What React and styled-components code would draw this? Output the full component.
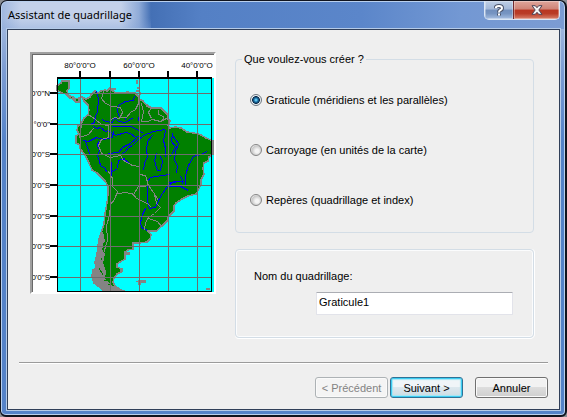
import React, { useState } from "react";
import styled, { createGlobalStyle } from "styled-components";

const GlobalStyle = createGlobalStyle`
  * { box-sizing: border-box; }
  body {
    margin: 0;
    background: #8c8f94;
    color: #000;
    font: 11px/14px "Liberation Sans", Arial, sans-serif;
  }
  button, input { font: inherit; color: inherit; }
`;

const Dialog = styled.main`
  display: flex;
  flex-direction: column;
  min-height: 100vh;
  padding: 0 5px 5px 6px;
  border: 1px solid #10141f;
  border-right-width: 2px;
  border-bottom-width: 2px;
  border-radius: 7px 7px 6px 6px;
  box-shadow: inset 0 0 0 1px #b9d0ee;
  background:
    linear-gradient(#7f9fd500 0, #7f9fd500 60%, #7f9fd555 100%) left top / 150px 28px no-repeat,
    linear-gradient(90deg, #9fb7de 0, #c3d1ea 20px, #c3d1ea 120px, #8fabd8 138px, #4470b5 150px, #5480c5 200px, #5b86ca 360px, #7398d3 460px, #7c9cd3 100%) top / 100% 28px no-repeat,
    linear-gradient(#9db5dd 28px, #7c9cd3 70px, #5583c9 140px);
`;

const TitleBar = styled.header`
  display: flex;
  align-items: flex-start;
  justify-content: space-between;
  height: 28px;
`;

const Title = styled.h1`
  margin: 0;
  padding: 5px 0 0 1px;
  font: 11px/18px "Noto Sans", "Open Sans", sans-serif;
`;

const Caption = styled.div`
  display: flex;
  height: 19px;
  border: 1px solid #dbe7f6;
  border-top: 0;
  border-radius: 0 0 5px 5px;
  overflow: hidden;
`;

const CaptionButton = styled.button`
  display: grid;
  place-items: center;
  width: ${(p) => (p.$danger ? 46 : 28)}px;
  padding: 0;
  border: 0;
  border-left: ${(p) => (p.$danger ? "1px solid #712b30" : "0")};
  background: ${(p) =>
    p.$danger
      ? "linear-gradient(#dfa69c 0, #cf8376 45%, #b93622 50%, #b93c27 70%, #d9826d 100%)"
      : "linear-gradient(#bfcfe6 0, #a3b8d8 45%, #718fbd 50%, #7795c2 70%, #a7bfe2 100%)"};
  box-shadow: inset 0 0 0 1px #ffffff55;
`;

const Client = styled.form`
  display: flex;
  flex: 1;
  flex-direction: column;
  margin: 0;
  padding: 22px 11px 11px;
  border: 1px solid #303f59;
  outline: 1px solid #b5cbe8;
  background: #efefef;
`;

const Content = styled.div`
  display: grid;
  grid-template-columns: 186px 1fr;
  gap: 19px;
  align-items: start;
  padding: 0 14px 0 11px;
`;

const MapFrame = styled.figure`
  margin: 0;
  border: 2px solid #a0a0a0;
  border-right: 2px solid #fff;
  border-bottom: 2px solid #fff;
  background: #fff;
`;

const MapPicture = styled.svg`
  display: block;
  width: 100%;
  height: auto;
  border-top: 1px solid #696969;
  border-left: 1px solid #696969;
`;

const Options = styled.div`
  display: flex;
  flex-direction: column;
  gap: 16px;
`;

const Group = styled.fieldset`
  min-width: 0;
  margin: 0;
  padding: 19px 13px 22px 14px;
  border: 1px solid #d3dde6;
  border-radius: 4px;
  box-shadow: inset 0 0 0 1px #fbfcfd, 0 1px 0 #fff, 1px 0 0 #fff;
`;

const ChoiceGroup = styled(Group)`
  display: grid;
  gap: 36px;
  padding: 27px 14px 25px;
  box-shadow: none;
`;

const Legend = styled.legend`
  margin-left: -8px;
  padding: 0 2px;
`;

const RadioLabel = styled.label`
  display: flex;
  align-items: center;
  gap: 4px;
  white-space: nowrap;
`;

const Radio = styled.input.attrs({ type: "radio" })`
  appearance: none;
  flex: none;
  width: 12px;
  height: 12px;
  margin: 0;
  border: 1px solid #858585;
  border-radius: 50%;
  background: radial-gradient(circle at 60% 60%, #f4f4f4 0 20%, #c8c8c8 60%, #f6f6f6 75%);
  &:checked {
    border-color: #6e7780;
    background: radial-gradient(circle at 50% 50%, #5fc3ec 0 10%, #176a9f 30%, #0e2c4a 50%, #e8eef2 60%);
  }
`;

const FieldLabel = styled.label`
  display: block;
  padding-left: 4px;
`;

const TextField = styled.input.attrs({ type: "text" })`
  display: block;
  width: calc(100% - 73px);
  height: 23px;
  margin: 9px 7px 0 auto;
  padding: 0 2px 3px;
  border: 1px solid #e2e3ea;
  border-top-color: #abadb3;
  border-radius: 1px;
  background: #fff;
`;

const Footer = styled.footer`
  display: flex;
  justify-content: flex-end;
  gap: 2px;
  margin-top: auto;
  padding: 14px 0 0;
  border-top: 1px solid #9b9b9b;
  box-shadow: inset 0 1px 0 #fff;
`;

const PushButton = styled.button`
  width: 73px;
  height: 21px;
  padding: 0;
  margin-left: ${(p) => (p.$apart ? 10 : 0)}px;
  border: 1px solid ${(p) => (p.$primary ? "#2f7296" : "#707070")};
  border-radius: 3px;
  background: ${(p) =>
    p.$primary
      ? "linear-gradient(#f0f5f8 0 45%, #dce8ee 50%, #cddbe2 100%)"
      : "linear-gradient(#f2f2f2 0 45%, #dddddd 50%, #cfcfcf 100%)"};
  box-shadow: ${(p) => (p.$primary ? "inset 0 0 0 1px #3ccdf2, inset 0 0 1px 2px #a5e6f5" : "inset 0 0 0 1px #fafafa")};
  white-space: nowrap;
  &:disabled {
    border-color: #adb2b5;
    background: #f4f4f4;
    color: #838383;
  }
`;

const LAND =
  "M82 97L86 99L90 97L91 95L95 91L98 93L101 91L105 90L107 91L110 88L113 91L116 93H124L127 92L135 93L138 96L139 99L143 101L147 106L151 108H161L165 112L168 115V119L170 121L168 125L170 128L175 127L181 128L187 132L194 133L201 135L206 138L213 141V154L209 157L208 161L204 163L203 169L204 174L201 180V185L196 194L188 196L182 199L176 203L174 206V211L168 217V220L162 226L156 231H148L151 235L150 239L147 242L139 243H133V249L128 250L125 252V259L120 262L117 264V267L122 269L121 272L117 274L114 278L113 282L115 286L121 290H103L98 286L94 283L92 276L93 270L96 268L95 262L97 254L98 246L99 239L102 230L104 224L105 214L107 203L108 194V186L105 181L101 177L97 173L92 170L89 163L86 157L80 148V145L76 143V136L79 134L77 130L78 126L81 124L84 118L88 115L89 110L88 105L84 101Z";
const PATAGONIA =
  "M98 240L103 231L105 241L102 249L105 254L103 263L106 271L105 279L109 283L113 286L121 290H103L98 286L94 283L92 276L93 270L96 268L95 262L97 254L98 246Z";
const ISTHMUS = "M57 86L61 83L62 81H69V88L67 91L68 95L73 97L75 99L79 98V102H76L73 99L70 98L66 94L62 93L57 90Z";
const RIVERS = [
  "M96 91L98 98L97 111L95 116L94 122L90 124",
  "M134 96L133 100L125 101L118 105L117 111L119 117H124L126 120",
  "M102 119L105 121L112 122L114 117L118 121L125 122L133 117",
  "M93 126L96 128L100 127L105 131L108 130L115 135L125 132L130 133L135 137L140 135",
  "M111 126H130L137 129L143 133",
  "M165 129L153 131L143 135L137 140L132 145L128 147L125 151L119 155",
  "M137 137L130 143L122 147L118 152L108 153",
  "M113 131L112 137L103 139L96 137L88 141L83 140",
  "M85 141L88 150L90 155",
  "M98 141L97 145L99 150L97 155L99 161L100 165L105 168L106 172",
  "M111 161V175M112 171L117 168L118 160L125 158",
  "M165 130L163 140L165 148V156",
  "M152 135L147 141L146 150L147 156L144 163L143 170",
  "M156 153L154 160L157 170H160L162 161L160 156",
  "M172 133L171 141L175 146L172 153L169 156",
  "M172 135L178 143L175 151L174 160L177 165L176 173",
  "M207 151L200 154L193 156L188 165L185 175V184",
  "M147 201V181L150 177L162 175L170 174",
  "M168 182L183 181L180 176M139 113L138 121",
  "M147 201L149 208L155 207L158 200L162 193L167 186L173 181H181L183 184",
  "M145 208L142 214L140 222L141 227L147 230",
  "M168 186H180L188 190M123 158L130 164",
];
const BORDERS = [
  "M103 91L101 98L105 103L112 106L120 107L122 112L119 118L114 117L111 119",
  "M88 114L95 119L101 124L108 125V137L101 139L98 145L101 153L110 157",
  "M81 124L79 137L88 134L93 128",
  "M139 97L138 103L135 109L130 112L126 117H118",
  "M141 103L143 111L141 121H147L152 119L160 121L168 117",
  "M143 102L151 107L148 112L151 118M158 109V114L163 116L162 121",
  "M110 157L120 155L123 160L132 165L139 166V174L145 175L148 185L153 192L158 200",
  "M108 171L112 178V186L117 191L114 199L110 204L109 215L106 225L107 240L103 253L101 269L104 276",
  "M117 193L126 192L133 194L138 186H145L147 184M132 193L136 198L147 203L151 207",
  "M154 194L156 203L160 207L154 213L148 217L145 222L144 230M148 218L157 221L161 226",
];
const LONGITUDES = [80, 110, 139, 168, 197];
const LATITUDES = [93, 124, 154, 185, 216, 246, 277];
const LAT_LABELS = ["0'0\"N", "°0'0\"", "0'0\"S", "0'0\"S", "0'0\"S", "0'0\"S", "0'0\"S"];
const LON_LABELS = [
  [80, "80°0'0\"O"],
  [139, "60°0'0\"O"],
  [197, "40°0'0\"O"],
];

function MapPreview() {
  return (
    <MapFrame>
      <MapPicture viewBox="33 55 181 237" role="img" aria-label="Graticule">
        <g shapeRendering="crispEdges">
          <rect x="57" y="78" width="157" height="215" fill="#00ffff" />
          <g fill="#008000" stroke="#848484" strokeWidth="1.5">
            <path d={ISTHMUS} />
            <path d={LAND} />
          </g>
          <path d={PATAGONIA} fill="#848484" />
          <path d="M103 243L106 250M101 258L105 264M99 268L103 275M104 280H112M108 284H113" stroke="#008000" fill="none" />
          <g fill="none" transform="translate(0.5 0.5)">
            <path d={RIVERS.join("")} stroke="#0000f0" />
            <path d={BORDERS.join("")} stroke="#848484" />
            <path d="M136 79V83M137 86V88M135 90H138M139 91V94M111 88H115" stroke="#848484" strokeWidth="2" />
          </g>
          <path
            d="M136 281L139 280H146V283H141V285H138V282H136ZM206 288H210V290H206ZM125 252H130V255H126V257H124ZM120 268H123V272H120ZM120 290H125V292H120Z"
            fill="#848484"
          />
          <g fill="#6e6e6e">
            {LONGITUDES.map((x) => <rect key={x} x={x} y="79" width="1" height="212" />)}
            {LATITUDES.map((y) => <rect key={y} x="58" y={y} width="154" height="1" />)}
          </g>
          <g fill="#000">
            <rect x="57" y="77" width="155" height="2" />
            <rect x="57" y="77" width="1" height="215" />
            <rect x="211" y="77" width="1" height="215" />
            <rect x="57" y="291" width="155" height="1" />
            {LONGITUDES.map((x) => <rect key={x} x={x - 1} y="71" width="2" height="7" />)}
            {LATITUDES.map((y) => <rect key={y} x="50" y={y - 1} width="7" height="2" />)}
          </g>
        </g>
        <g fontSize="8" fill="#000">
          {LON_LABELS.map(([x, label]) => (
            <text key={x} x={x} y="68" textAnchor="middle">{label}</text>
          ))}
          {LAT_LABELS.map((label, i) => (
            <text key={LATITUDES[i]} x="50" y={LATITUDES[i] + 3} textAnchor="end">{label}</text>
          ))}
        </g>
      </MapPicture>
    </MapFrame>
  );
}

const KINDS = [
  ["graticule", "Graticule (méridiens et les parallèles)"],
  ["carroyage", "Carroyage (en unités de la carte)"],
  ["reperes", "Repères (quadrillage et index)"],
];

export default function App() {
  const [kind, setKind] = useState("graticule");
  const [name, setName] = useState("Graticule1");

  return (
    <>
      <GlobalStyle />
      <Dialog>
        <TitleBar>
          <Title>Assistant de quadrillage</Title>
          <Caption>
            <CaptionButton type="button" aria-label="Aide">
              <svg width="10" height="13" viewBox="0 0 10 13" fill="none">
                <path d="M1.8 4.2Q1.8 2 5 2Q8 2 8 4.2Q8 5.6 6 6.3Q5 6.8 5 8.4M5 9.6V11.4" stroke="#4b546b" strokeWidth="4" />
                <path d="M1.8 4.2Q1.8 2 5 2Q8 2 8 4.2Q8 5.6 6 6.3Q5 6.8 5 8.4M5 9.6V11.4" stroke="#fff" strokeWidth="2" />
              </svg>
            </CaptionButton>
            <CaptionButton type="button" $danger aria-label="Fermer">
              <svg width="12" height="10" viewBox="0 0 12 10">
                <path d="M1 .7H4.3L6 2.7L7.7 .7H11L7.8 5L11 9.3H7.7L6 7.3L4.3 9.3H1L4.2 5Z" fill="#f5f5f5" stroke="#4c4355" />
              </svg>
            </CaptionButton>
          </Caption>
        </TitleBar>
        <Client onSubmit={(e) => e.preventDefault()}>
          <Content>
            <MapPreview />
            <Options>
              <ChoiceGroup>
                <Legend>Que voulez-vous créer ?</Legend>
                {KINDS.map(([value, label]) => (
                  <RadioLabel key={value}>
                    <Radio name="kind" value={value} checked={kind === value} onChange={() => setKind(value)} />
                    {label}
                  </RadioLabel>
                ))}
              </ChoiceGroup>
              <Group>
                <FieldLabel htmlFor="grid-name">Nom du quadrillage:</FieldLabel>
                <TextField id="grid-name" value={name} onChange={(e) => setName(e.target.value)} />
              </Group>
            </Options>
          </Content>
          <Footer>
            <PushButton type="button" disabled>&lt; Précédent</PushButton>
            <PushButton type="submit" $primary>Suivant &gt;</PushButton>
            <PushButton type="button" $apart>Annuler</PushButton>
          </Footer>
        </Client>
      </Dialog>
    </>
  );
}
